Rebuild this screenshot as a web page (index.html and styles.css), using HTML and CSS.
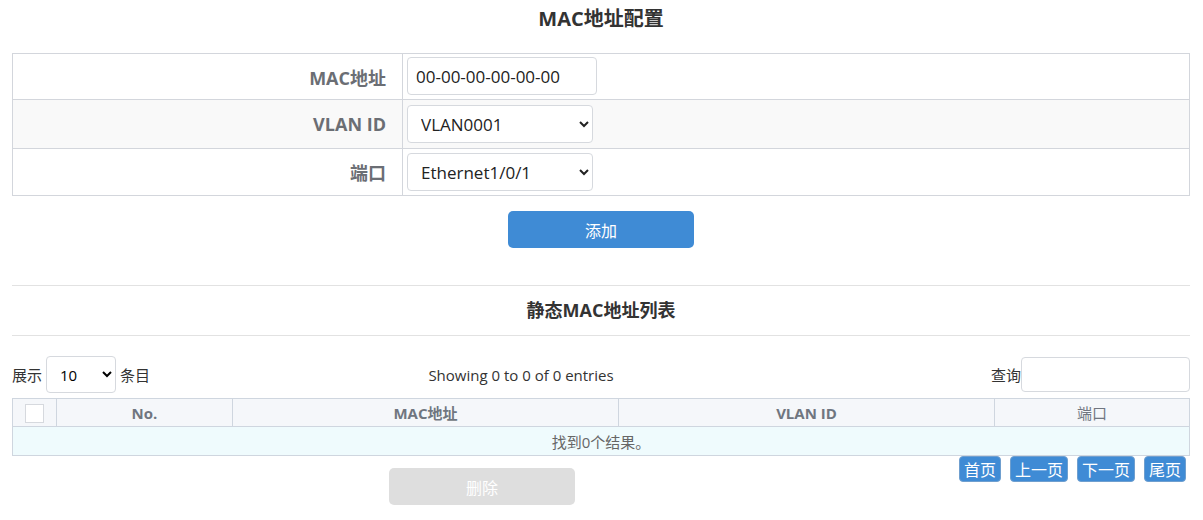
FILE: index.html
```html
<!DOCTYPE html>
<html lang="zh-CN">
<head>
    <meta charset="UTF-8">
    <title>MAC地址配置</title>
    <link rel="stylesheet" href="styles.css">
</head>
<body>
    <div class="page">
        <h2 class="page-title">MAC地址配置</h2>
        <table class="form-table">
            <tr class="r1">
                <th>MAC地址</th>
                <td><input type="text" class="field" value="00-00-00-00-00-00"></td>
            </tr>
            <tr class="alt r2">
                <th>VLAN ID</th>
                <td>
                    <select class="field sel">
                        <option>VLAN0001</option>
                    </select>
                </td>
            </tr>
            <tr class="r3">
                <th>端口</th>
                <td>
                    <select class="field sel">
                        <option>Ethernet1/0/1</option>
                    </select>
                </td>
            </tr>
        </table>
        <div class="btn-row">
            <button type="button" class="btn btn-primary">添加</button>
        </div>

        <div class="section-title">静态MAC地址列表</div>

        <div class="list-tools">
            <div class="length">
                展示
                <select class="len-sel">
                    <option>10</option>
                </select>
                条目
            </div>
            <div class="info">Showing 0 to 0 of 0 entries</div>
            <div class="search">查询<input type="text" class="search-input"></div>
        </div>

        <table class="data-table">
            <thead>
                <tr>
                    <th class="col-check"><span class="checkbox"></span></th>
                    <th class="col-no">No.</th>
                    <th class="col-mac">MAC地址</th>
                    <th class="col-vlan">VLAN ID</th>
                    <th class="col-port">端口</th>
                </tr>
            </thead>
            <tbody>
                <tr class="empty">
                    <td colspan="5">找到0个结果。</td>
                </tr>
            </tbody>
        </table>

        <div class="bottom">
            <div class="del-wrap">
                <button type="button" class="btn btn-disabled" disabled>删除</button>
            </div>
            <div class="pager">
                <button type="button" class="pg">首页</button>
                <button type="button" class="pg">上一页</button>
                <button type="button" class="pg">下一页</button>
                <button type="button" class="pg">尾页</button>
            </div>
        </div>
    </div>
</body>
</html>
```

FILE: styles.css
```css
body {
    margin: 0;
    font-family: "Open Sans", "Noto Sans CJK SC", sans-serif;
    font-size: 15px;
    color: #333;
    background: #fff;
}
.page {
    padding: 0 13px 0 12px;
}
.page-title {
    margin: 0;
    padding-top: 3px;
    height: 50px;
    text-align: center;
    font-size: 20px;
    font-weight: bold;
    color: #333;
}
.form-table {
    width: 100%;
    border-collapse: collapse;
    border: 1px solid #d3d6dc;
}
.form-table tr {
    border-bottom: 1px solid #d3d6dc;
}
.form-table tr.alt {
    background: #f9f9f9;
}
.form-table .r1 td {
    height: 38px;
    padding: 3px 4px 4px 4px;
}
.form-table .r2 td {
    height: 38px;
    padding: 5px 4px 5px 4px;
}
.form-table .r3 td {
    height: 38px;
    padding: 4px 4px 4px 4px;
}
.form-table th {
    width: 373px;
    padding: 0 16px 0 0;
    text-align: right;
    font-size: 18px;
    color: #6b6e74;
    border-right: 1px solid #d3d6dc;
}
.field {
    box-sizing: border-box;
    height: 38px;
    width: 190px;
    padding: 0 8px;
    font-family: inherit;
    font-size: 17px;
    color: #222;
    border: 1px solid #d6d9de;
    border-radius: 4px;
    background: #fff;
}
.sel {
    width: 186px;
    padding-left: 9px;
}
.btn-row {
    text-align: center;
    padding: 15px 0 0 0;
    height: 74px;
}
.btn {
    width: 186px;
    height: 37px;
    border: none;
    border-radius: 5px;
    font-family: inherit;
    font-size: 16px;
    color: #fff;
}
.btn-primary {
    background: #3f8bd5;
}
.btn-disabled {
    background: #dedede;
}
.section-title {
    border-top: 1px solid #e2e2e2;
    border-bottom: 1px solid #e2e2e2;
    height: 49px;
    line-height: 49px;
    text-align: center;
    font-size: 18px;
    font-weight: bold;
    color: #333;
}
.list-tools {
    display: flex;
    align-items: center;
    margin-top: 20px;
    height: 37px;
    font-size: 15px;
}
.length {
    display: flex;
    align-items: center;
    gap: 4px;
    width: 150px;
}
.len-sel {
    box-sizing: border-box;
    height: 37px;
    width: 70px;
    padding-left: 9px;
    font-family: inherit;
    font-size: 15px;
    border: 1px solid #d6d9de;
    border-radius: 4px;
    background: #fff;
}
.info {
    width: 718px;
    text-align: center;
    font-size: 15px;
    color: #333;
}
.search {
    flex: 1;
    display: flex;
    align-items: center;
    justify-content: flex-end;
}
.search-input {
    box-sizing: border-box;
    width: 169px;
    height: 35px;
    border: 1px solid #d6d9de;
    border-radius: 4px;
}
.data-table {
    width: 100%;
    margin-top: 5px;
    border-collapse: collapse;
    border: 1px solid #cfd6df;
    font-size: 15px;
}
.data-table th {
    height: 27px;
    padding: 0;
    background: #f5f7fa;
    color: #707680;
    border-right: 1px solid #cfd6df;
    border-bottom: 1px solid #cfd6df;
}
.col-check {
    width: 43px;
}
.col-no {
    width: 175px;
}
.col-mac {
    width: 385px;
}
.col-vlan {
    width: 375px;
}
.col-port {
    font-weight: normal;
}
.checkbox {
    display: inline-block;
    width: 17px;
    height: 17px;
    border: 1px solid #d6d9de;
    background: #fff;
    vertical-align: middle;
}
.empty td {
    height: 28px;
    padding: 0;
    background: #effbfd;
    text-align: center;
    color: #666;
}
.bottom {
    display: flex;
    justify-content: space-between;
    align-items: flex-start;
}
.del-wrap {
    padding: 12px 0 0 377px;
}
.pager {
    display: flex;
    gap: 9px;
    padding-right: 4px;
}
.pg {
    height: 26px;
    padding: 0 4px;
    border: 1px solid #6f9fcf;
    border-radius: 4px;
    background: #3f8bd5;
    color: #fff;
    font-family: inherit;
    font-size: 16px;
}
```
